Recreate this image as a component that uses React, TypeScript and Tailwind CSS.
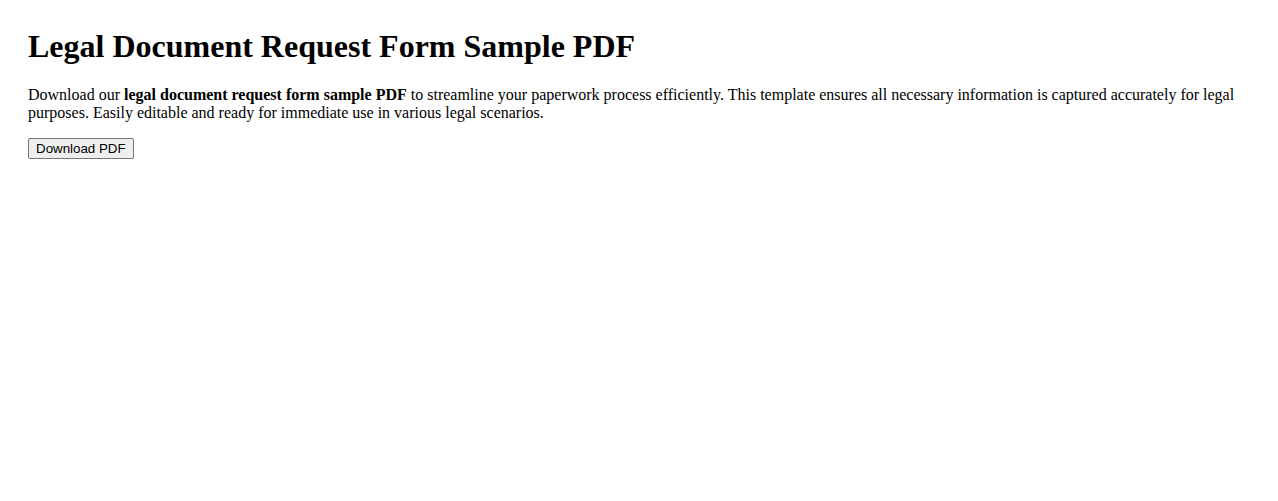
import React from 'react';

export default function App() {
  return (
    <div className="min-h-screen bg-white px-[28px] pt-[28px] text-black font-['Liberation_Serif','Times_New_Roman',serif]">
      <h1 className="text-[32px] font-bold leading-[37px] mb-[21px]">Legal Document Request Form Sample PDF</h1>
      <p className="text-[16px] leading-[18px] mb-[14px]">
        Download our <strong>legal document request form sample PDF</strong> to streamline your paperwork process
        efficiently. This template ensures all necessary information is captured accurately for legal purposes. Easily
        editable and ready for immediate use in various legal scenarios.
      </p>
      <button className="h-[21px] px-[7px] bg-[#efefef] border border-[#767676] rounded-[2px] text-[13.33px] leading-[15px] font-['Liberation_Sans',Arial,sans-serif] hover:bg-[#e5e5e5]">
        Download PDF
      </button>
    </div>
  );
}
